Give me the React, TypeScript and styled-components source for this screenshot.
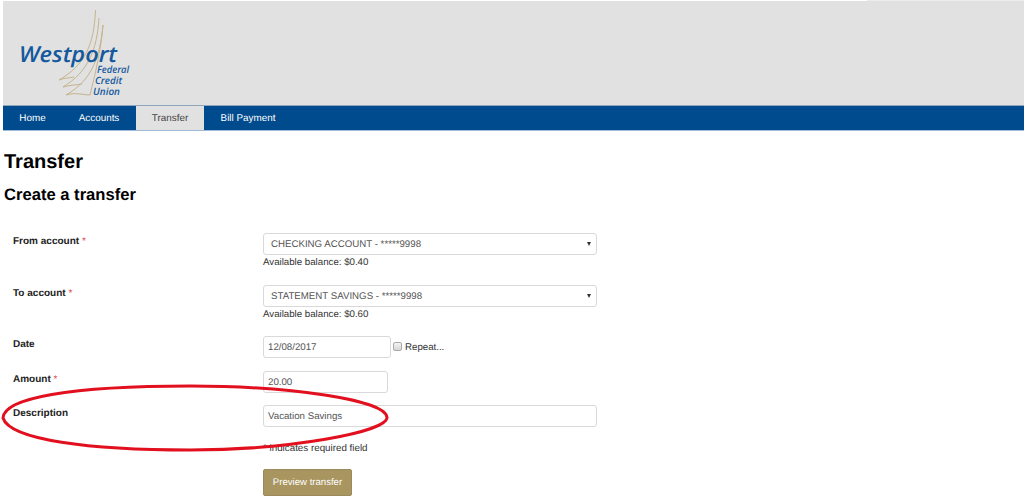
import React from "react";
import styled, { createGlobalStyle } from "styled-components";

const Global = createGlobalStyle`
  html, body { margin: 0; padding: 0; background: #fff; }
  body {
    font-family: "Liberation Sans", Arial, sans-serif;
    color: #333;
    overflow: hidden;
    text-rendering: geometricPrecision;
  }
`;
const Page = styled.div`
  position: relative;
  width: 1024px;
  height: 498px;
  overflow: hidden;
  background: #fff;
`;
const TopStrip = styled.div`
  height: 1px;
  background: linear-gradient(to right, #fff 867px, #ececec 867px);
`;
const TopBar = styled.header`
  margin-left: 3px;
  height: 104px;
  background: #e1e1e1;
  display: flex;
  align-items: flex-start;
`;
const Logo = styled.svg`
  display: block;
  width: 140px;
  height: 104px;
  margin-left: -3px;
  flex: none;
`;
const Nav = styled.nav`
  margin-left: 3px;
  height: 26px;
  box-sizing: border-box;
  background: #004b8d;
  display: flex;
  border-top: 1px solid #8fa6bd;
  border-bottom: 1px solid #9dbbd6;
`;
const NavItem = styled.a<{ $active?: boolean; $w: number }>`
  width: ${(p) => p.$w}px;
  display: flex;
  align-items: center;
  justify-content: center;
  font-size: 9.9px;
  color: ${(p) => (p.$active ? "#444" : "#fff")};
  background: ${(p) => (p.$active ? "#e1e1e1" : "transparent")};
`;
const Main = styled.main`
  padding-left: 4px;
`;
const Title = styled.h1`
  margin: 20px 0 0;
  font-size: 20px;
  line-height: 22px;
  font-weight: 700;
  color: #000;
`;
const Subtitle = styled.h2`
  margin: 12px 0 0;
  font-size: 16.6px;
  line-height: 20px;
  font-weight: 700;
  color: #000;
`;
const Form = styled.form`
  margin-top: 28px;
  display: flex;
  flex-direction: column;
`;
const Row = styled.div<{ $h: number }>`
  display: grid;
  grid-template-columns: 259px 1fr;
  align-items: start;
  height: ${(p) => p.$h}px;
`;
const Label = styled.label`
  padding: 3px 0 0 9px;
  font-size: 10px;
  line-height: 12px;
  font-weight: 700;
  color: #222;
`;
const Star = styled.span`
  color: #d9534f;
  font-weight: 400;
`;
const SelectBox = styled.div`
  box-sizing: border-box;
  width: 334px;
  height: 22px;
  border: 1px solid #d9d9d9;
  border-radius: 3px;
  display: flex;
  align-items: center;
  justify-content: space-between;
  padding: 0 5px 0 7px;
  font-size: 9.7px;
  color: #555;
  background: #fff;
`;
const Caret = styled.span`
  width: 0;
  height: 0;
  border-left: 2.5px solid transparent;
  border-right: 2.5px solid transparent;
  border-top: 4px solid #333;
`;
const Balance = styled.div`
  margin-top: 1px;
  font-size: 9.7px;
  line-height: 13px;
  color: #333;
`;
const Inline = styled.div`
  display: flex;
  align-items: center;
`;
const Input = styled.div<{ $w: number }>`
  box-sizing: border-box;
  width: ${(p) => p.$w}px;
  height: 22px;
  border: 1px solid #d9d9d9;
  border-radius: 3px;
  padding: 0 4px;
  display: flex;
  align-items: center;
  font-size: 9.7px;
  color: #555;
  background: #fff;
`;
const Check = styled.span`
  box-sizing: border-box;
  width: 9px;
  height: 9px;
  margin: 0 3px 0 2px;
  border: 1px solid #aaa;
  border-radius: 2px;
  background: linear-gradient(#f4f4f4, #d6d6d6);
  position: relative;
  top: -1px;
`;
const RepeatText = styled.span`
  font-size: 9.7px;
  color: #333;
`;
const Hint = styled.div`
  padding-top: 1px;
  font-size: 9.8px;
  line-height: 12px;
  color: #333;
`;
const Button = styled.button`
  box-sizing: border-box;
  display: block;
  width: 89px;
  height: 27px;
  padding: 0;
  border: 1px solid #9a8a5c;
  border-radius: 2px;
  background: #a8955f;
  color: #fff;
  font-family: inherit;
  font-size: 9.6px;
  text-rendering: geometricPrecision;
`;
const Circle = styled.svg`
  position: absolute;
  left: 0;
  top: 380px;
  width: 400px;
  height: 76px;
  pointer-events: none;
`;

export default function App() {
  return (
    <Page>
      <Global />
      <TopStrip />
      <TopBar>
        <Logo viewBox="0 1 140 104">
          <g fill="none" stroke="#c6b48c" strokeWidth="1">
            <path d="M95.5 10 C94 45 85 65 59 80" />
            <path d="M99 18 C97 50 88 72 63 87" />
            <path d="M103 25 C100 55 93 80 66 95" />
            <path d="M59 80 C64 78 69 78 74 77" />
            <path d="M63 87 C70 85 76 85 82 84" />
            <path d="M66 95 C75 92 84 95 90 95" />
            <path d="M103 25 C101 50 95 75 90 95" />
          </g>
          <text x="19" y="62" fontFamily="Open Sans" fontStyle="italic" fontWeight="600" fontSize="22" fill="#14599e" textLength="98" lengthAdjust="spacingAndGlyphs">Westport</text>
          <g fontFamily="Open Sans" fontStyle="italic" fontWeight="600" fontSize="10" fill="#14599e">
            <text x="97" y="73" textLength="32" lengthAdjust="spacingAndGlyphs">Federal</text>
            <text x="95" y="84" textLength="27" lengthAdjust="spacingAndGlyphs">Credit</text>
            <text x="93" y="95" textLength="27" lengthAdjust="spacingAndGlyphs">Union</text>
          </g>
        </Logo>
      </TopBar>
      <Nav>
        <NavItem $w={59}>Home</NavItem>
        <NavItem $w={74}>Accounts</NavItem>
        <NavItem $w={68} $active>Transfer</NavItem>
        <NavItem $w={88}>Bill Payment</NavItem>
      </Nav>
      <Main>
        <Title>Transfer</Title>
        <Subtitle>Create a transfer</Subtitle>
        <Form>
          <Row $h={52}>
            <Label>From account <Star>*</Star></Label>
            <div>
              <SelectBox>CHECKING ACCOUNT - *****9998<Caret /></SelectBox>
              <Balance>Available balance: $0.40</Balance>
            </div>
          </Row>
          <Row $h={51}>
            <Label>To account <Star>*</Star></Label>
            <div>
              <SelectBox>STATEMENT SAVINGS - *****9998<Caret /></SelectBox>
              <Balance>Available balance: $0.60</Balance>
            </div>
          </Row>
          <Row $h={35}>
            <Label>Date</Label>
            <Inline>
              <Input $w={128}>12/08/2017</Input>
              <Check />
              <RepeatText>Repeat...</RepeatText>
            </Inline>
          </Row>
          <Row $h={34}>
            <Label>Amount <Star>*</Star></Label>
            <Inline><Input $w={125}>20.00</Input></Inline>
          </Row>
          <Row $h={37}>
            <Label>Description</Label>
            <Inline><Input $w={334}>Vacation Savings</Input></Inline>
          </Row>
          <Row $h={27}>
            <span />
            <Hint>* indicates required field</Hint>
          </Row>
          <Row $h={28}>
            <span />
            <Button type="button">Preview transfer</Button>
          </Row>
        </Form>
      </Main>
      <Circle viewBox="0 380 400 76">
        <path
          d="M3 418 C4 398 70 386 190 386 C290 386 388 400 387 418 C385 432 290 450 190 450 C90 450 10 440 3 418 Z"
          fill="none"
          stroke="#e2101e"
          strokeWidth="3"
        />
      </Circle>
    </Page>
  );
}
